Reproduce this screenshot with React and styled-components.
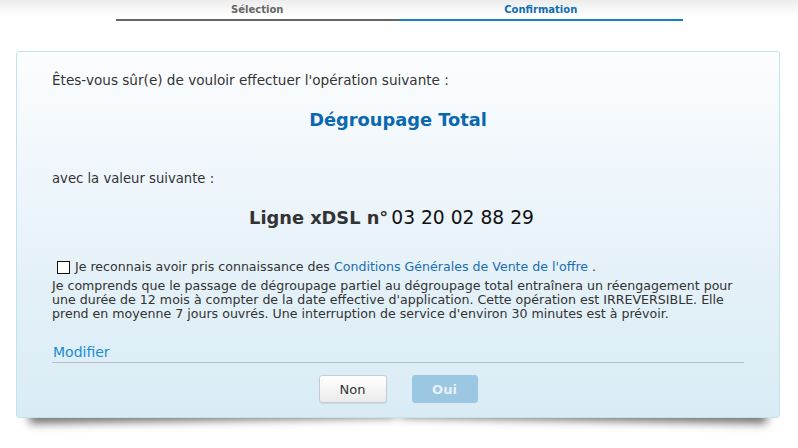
import styled, { createGlobalStyle } from "styled-components";

const GlobalStyle = createGlobalStyle`
  html, body {
    margin: 0;
    padding: 0;
  }
  body {
    background: linear-gradient(#ececec 0px, #ffffff 16px) no-repeat;
    background-color: #ffffff;
    font-family: "DejaVu Sans", Verdana, sans-serif;
    color: #333333;
  }
`;

const Page = styled.div`
  position: relative;
  z-index: 0;
  width: 798px;
  height: 448px;
  overflow: hidden;
`;

const Steps = styled.div`
  display: flex;
  width: 567px;
  margin: 0 auto;
`;

const Step = styled.div`
  flex: 1;
  box-sizing: border-box;
  height: 21px;
  padding-top: 4px;
  text-align: center;
  font-size: 10px;
  font-weight: bold;
  line-height: 12px;
  border-bottom: 2px solid ${(p) => (p.$active ? "#1582c4" : "#666666")};
  color: ${(p) => (p.$active ? "#0f6db3" : "#666666")};
`;

const Panel = styled.div`
  position: relative;
  margin: 30px 18px 0 16px;
  height: 367px;
  box-sizing: border-box;
  border: 1px solid #c4e2ec;
  border-radius: 3px;
  background: linear-gradient(#fcfdff 0%, #f2f8fc 25%, #e5f1f8 60%, #d9ecf6 100%);
  padding: 20px 35px 0 35px;

  &::before,
  &::after {
    content: "";
    position: absolute;
    z-index: -1;
    bottom: 12px;
    width: 48%;
    height: 12px;
    box-shadow: 0 15px 10px rgba(0, 0, 0, 0.6);
  }
  &::before {
    left: 12px;
    transform: rotate(-1deg);
  }
  &::after {
    right: 12px;
    transform: rotate(1deg);
  }
`;

const Text = styled.p`
  margin: ${(p) => p.$margin || "0"};
  font-size: ${(p) => p.$size || "13px"};
  line-height: 16px;
  color: #333333;
`;

const Operation = styled.h2`
  margin: 21px 0 0;
  text-align: center;
  font-size: 17.8px;
  line-height: 22px;
  font-weight: bold;
  color: #0a68ae;
`;

const LineValue = styled.div`
  margin: 19px 0 0;
  padding-right: 13px;
  text-align: center;
  line-height: 24px;
  color: #333333;
`;

const LineLabel = styled.span`
  font-size: 17.8px;
  font-weight: bold;
`;

const LineNumber = styled.span`
  font-size: 18.7px;
  color: #111111;
  margin-left: 3px;
`;

const Agreement = styled.label`
  display: flex;
  align-items: center;
  gap: 5px;
  margin: 28px 0 0 5px;
  font-size: 12.6px;
  line-height: 16px;
  color: #333333;
`;

const Box = styled.span`
  width: 11px;
  height: 11px;
  border: 1px solid #111111;
  background: #ffffff;
  flex: none;
`;

const Link = styled.a`
  color: ${(p) => p.$color || "#1a6db3"};
  text-decoration: none;
  cursor: pointer;
`;

const Notice = styled.p`
  margin: 4px 0 0;
  font-size: 12.6px;
  line-height: 14px;
  color: #333333;
`;

const Footer = styled.div`
  margin-top: 23px;
  padding: 0 1px 2px;
  border-bottom: 1px solid #b4bccb;
  font-size: 14px;
  line-height: 16px;
`;

const Buttons = styled.div`
  display: flex;
  justify-content: center;
  gap: 25px;
  margin-top: 12px;
`;

const Button = styled.button`
  width: ${(p) => p.$width || "68px"};
  height: 28px;
  border-radius: 3px;
  font-family: "DejaVu Sans", Verdana, sans-serif;
  font-size: 13px;
  cursor: pointer;
  ${(p) =>
    p.$primary
      ? `
    border: 1px solid #9bc7e2;
    background: #9cc7e2;
    color: #e6f2f9;
    font-weight: bold;
  `
      : `
    border: 1px solid #c9cdd2;
    background: linear-gradient(#ffffff, #ebebeb);
    color: #333333;
    box-shadow: 0 1px 1px rgba(0, 0, 0, 0.08);
  `}
`;

export default function App() {
  return (
    <Page>
      <GlobalStyle />
      <Steps>
        <Step>Sélection</Step>
        <Step $active>Confirmation</Step>
      </Steps>
      <Panel>
        <Text $size="13.6px">
          Êtes-vous sûr(e) de vouloir effectuer l'opération suivante :
        </Text>
        <Operation>Dégroupage Total</Operation>
        <Text $margin="40px 0 0" $size="13.2px">
          avec la valeur suivante :
        </Text>
        <LineValue>
          <LineLabel>Ligne xDSL n°</LineLabel>
          <LineNumber>03 20 02 88 29</LineNumber>
        </LineValue>
        <Agreement>
          <Box />
          <span>
            Je reconnais avoir pris connaissance des{" "}
            <Link>Conditions Générales de Vente de l'offre</Link> .
          </span>
        </Agreement>
        <Notice>
          Je comprends que le passage de dégroupage partiel au dégroupage total
          entraînera un réengagement pour une durée de 12 mois à compter de la
          date effective d'application. Cette opération est IRREVERSIBLE. Elle
          prend en moyenne 7 jours ouvrés. Une interruption de service d'environ
          30 minutes est à prévoir.
        </Notice>
        <Footer>
          <Link $color="#1b8dd0">Modifier</Link>
        </Footer>
        <Buttons>
          <Button>Non</Button>
          <Button $primary $width="66px">
            Oui
          </Button>
        </Buttons>
      </Panel>
    </Page>
  );
}
